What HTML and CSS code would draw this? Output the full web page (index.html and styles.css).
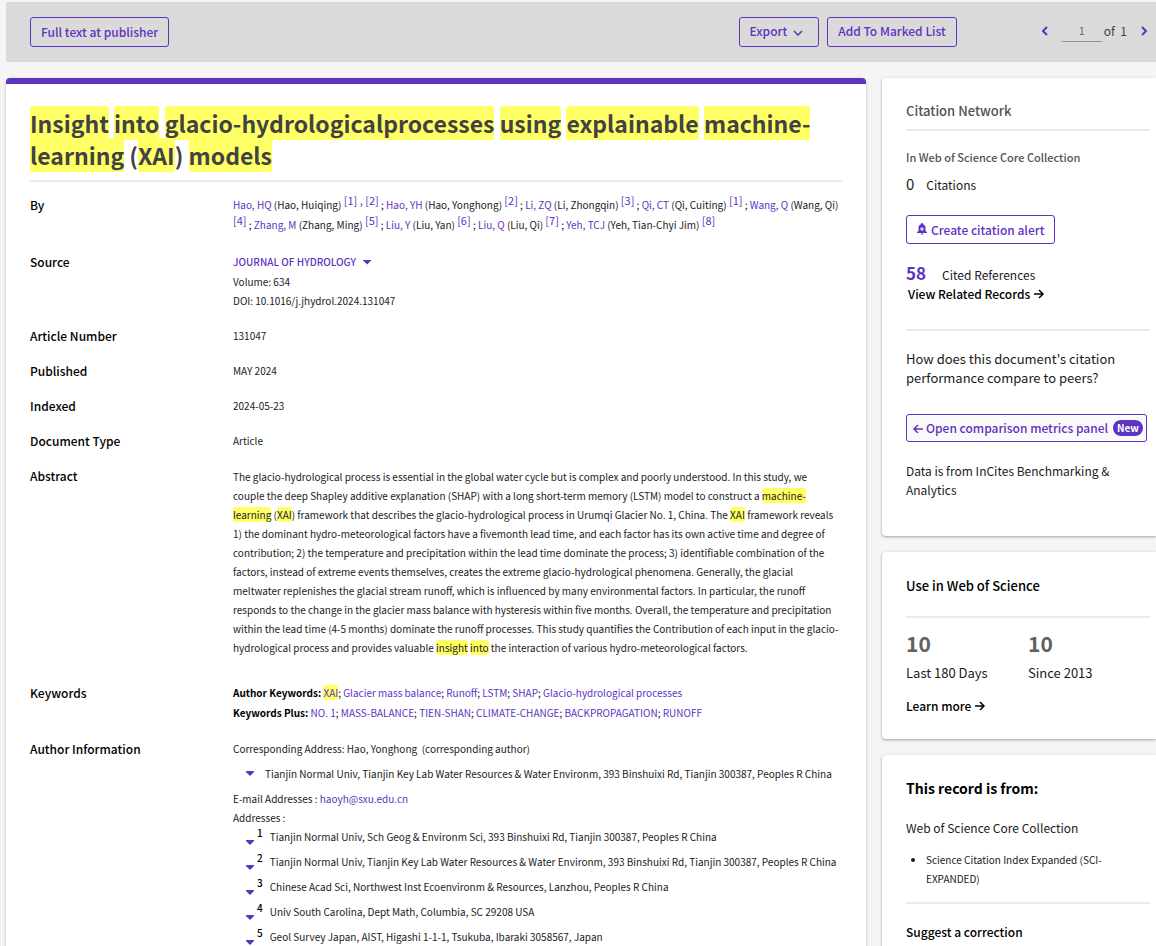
FILE: index.html
```html
<!DOCTYPE html>
<html lang="en">
<head>
  <meta charset="UTF-8">
  <title>Insight into glacio-hydrological processes - Web of Science</title>
  <link rel="stylesheet" href="styles.css">
</head>
<body>
  <!-- Top action bar -->
  <header class="toolbar">
    <button class="btn">Full text at publisher</button>
    <div class="toolbar-actions">
      <button class="btn">Export
        <svg class="chevron" width="10" height="6" viewBox="0 0 10 6"><path d="M1 1l4 4 4-4"/></svg>
      </button>
      <button class="btn">Add To Marked List</button>
    </div>
    <nav class="pager" aria-label="Record navigation">
      <button class="pager-arrow" aria-label="Previous record">
        <svg width="6" height="10" viewBox="0 0 6 10"><path d="M5 1L1 5l4 4"/></svg>
      </button>
      <input class="pager-input" type="text" value="1" aria-label="Record number">
      <span class="pager-total">of&nbsp; 1</span>
      <button class="pager-arrow" aria-label="Next record">
        <svg width="6" height="10" viewBox="0 0 6 10"><path d="M1 1l4 4-4 4"/></svg>
      </button>
    </nav>
  </header>

  <div class="layout">
    <!-- Full record -->
    <main class="record">
      <h1><mark>Insight</mark> <mark>into</mark> <mark>glacio-hydrologicalprocesses</mark> <mark>using</mark> <mark>explainable</mark> <mark>machine-learning</mark> (<mark>XAI</mark>) <mark>models</mark></h1>

      <dl class="fields">
        <dt>By</dt>
        <dd class="authors">
          <a href="#">Hao, HQ</a> (Hao, Huiqing) <sup><a href="#">[1]</a> , <a href="#">[2]</a></sup> ;
          <a href="#">Hao, YH</a> (Hao, Yonghong) <sup><a href="#">[2]</a></sup> ;
          <a href="#">Li, ZQ</a> (Li, Zhongqin) <sup><a href="#">[3]</a></sup> ;
          <a href="#">Qi, CT</a> (Qi, Cuiting) <sup><a href="#">[1]</a></sup> ;
          <a href="#">Wang, Q</a> (Wang, Qi) <sup><a href="#">[4]</a></sup> ;
          <a href="#">Zhang, M</a> (Zhang, Ming) <sup><a href="#">[5]</a></sup> ;
          <a href="#">Liu, Y</a> (Liu, Yan) <sup><a href="#">[6]</a></sup> ;
          <a href="#">Liu, Q</a> (Liu, Qi) <sup><a href="#">[7]</a></sup> ;
          <a href="#">Yeh, TCJ</a> (Yeh, Tian-Chyi Jim) <sup><a href="#">[8]</a></sup>
        </dd>

        <dt>Source</dt>
        <dd>
          <button class="journal">JOURNAL OF HYDROLOGY <span class="caret"></span></button>
          <div>Volume: 634</div>
          <div>DOI: 10.1016/j.jhydrol.2024.131047</div>
        </dd>

        <dt>Article Number</dt>
        <dd>131047</dd>

        <dt>Published</dt>
        <dd>MAY 2024</dd>

        <dt>Indexed</dt>
        <dd>2024-05-23</dd>

        <dt>Document Type</dt>
        <dd>Article</dd>

        <dt>Abstract</dt>
        <dd class="abstract">The glacio-hydrological process is essential in the global water cycle but is complex and poorly understood. In this study, we couple the deep Shapley additive explanation (SHAP) with a long short-term memory (LSTM) model to construct a <mark>machine-learning</mark> (<mark>XAI</mark>) framework that describes the glacio-hydrological process in Urumqi Glacier No. 1, China. The <mark>XAI</mark> framework reveals 1) the dominant hydro-meteorological factors have a fivemonth lead time, and each factor has its own active time and degree of contribution; 2) the temperature and precipitation within the lead time dominate the process; 3) identifiable combination of the factors, instead of extreme events themselves, creates the extreme glacio-hydrological phenomena. Generally, the glacial meltwater replenishes the glacial stream runoff, which is influenced by many environmental factors. In particular, the runoff responds to the change in the glacier mass balance with hysteresis within five months. Overall, the temperature and precipitation within the lead time (4-5 months) dominate the runoff processes. This study quantifies the Contribution of each input in the glacio-hydrological process and provides valuable <mark>insight</mark> <mark>into</mark> the interaction of various hydro-meteorological factors.</dd>

        <dt>Keywords</dt>
        <dd class="keywords">
          <div><b>Author Keywords:</b> <a href="#"><mark>XAI</mark></a>; <a href="#">Glacier mass balance</a>; <a href="#">Runoff</a>; <a href="#">LSTM</a>; <a href="#">SHAP</a>; <a href="#">Glacio-hydrological processes</a></div>
          <div><b>Keywords Plus:</b> <a href="#">NO. 1</a>; <a href="#">MASS-BALANCE</a>; <a href="#">TIEN-SHAN</a>; <a href="#">CLIMATE-CHANGE</a>; <a href="#">BACKPROPAGATION</a>; <a href="#">RUNOFF</a></div>
        </dd>

        <dt>Author Information</dt>
        <dd>
          <div>Corresponding Address: Hao, Yonghong&nbsp; (corresponding author)</div>
          <div class="corresponding"><span class="caret"></span>Tianjin Normal Univ, Tianjin Key Lab Water Resources &amp; Water Environm, 393 Binshuixi Rd, Tianjin 300387, Peoples R China</div>
          <div>E-mail Addresses : <a href="mailto:haoyh@sxu.edu.cn">haoyh@sxu.edu.cn</a></div>
          <div>Addresses :</div>
          <ul class="addresses">
            <li><span class="caret"></span><span class="num">1</span>Tianjin Normal Univ, Sch Geog &amp; Environm Sci, 393 Binshuixi Rd, Tianjin 300387, Peoples R China</li>
            <li><span class="caret"></span><span class="num">2</span>Tianjin Normal Univ, Tianjin Key Lab Water Resources &amp; Water Environm, 393 Binshuixi Rd, Tianjin 300387, Peoples R China</li>
            <li><span class="caret"></span><span class="num">3</span>Chinese Acad Sci, Northwest Inst Ecoenvironm &amp; Resources, Lanzhou, Peoples R China</li>
            <li><span class="caret"></span><span class="num">4</span>Univ South Carolina, Dept Math, Columbia, SC 29208 USA</li>
            <li><span class="caret"></span><span class="num">5</span>Geol Survey Japan, AIST, Higashi 1-1-1, Tsukuba, Ibaraki 3058567, Japan</li>
          </ul>
        </dd>
      </dl>
    </main>

    <!-- Sidebar -->
    <aside class="sidebar">
      <section class="card network">
        <h2>Citation Network</h2>
        <hr>
        <h3>In Web of Science Core Collection</h3>
        <p class="count"><span class="zero">0</span>Citations</p>
        <button class="btn alert-btn">
          <svg width="10" height="12" viewBox="0 0 10 12"><path fill="currentColor" fill-rule="evenodd" d="M5 0c.6 0 1 .4 1 1v.3c1.500.5 2.500 1.800 2.500 3.500V8L10 9.300V10H0v-.7L1.500 8V4.800C1.500 3.100 2.500 1.800 4 1.300V1c0-.6.4-1 1-1zM4.500 4v1.500H3v1h1.500V8h1V6.500H7v-1H5.500V4zM3.800 10.600h2.400a1.200 1.200 0 0 1-2.400 0z"/></svg>
          Create citation alert
        </button>
        <p class="count refs"><a href="#">58</a>Cited References</p>
        <a class="more related" href="#">View Related Records
          <svg class="arrow" width="10" height="10" viewBox="0 0 10 10"><path d="M0 5h9M5 1l4 4-4 4"/></svg>
        </a>
        <hr>
        <p class="question">How does this document's citation performance compare to peers?</p>
        <button class="btn metrics-btn">
          <svg class="arrow" width="10" height="10" viewBox="0 0 10 10"><path d="M10 6H1M5 2L1 6l4 4"/></svg>
          Open comparison metrics panel
          <span class="badge">New</span>
        </button>
        <p class="note">Data is from InCites Benchmarking &amp; Analytics</p>
      </section>

      <section class="card usage">
        <h2>Use in Web of Science</h2>
        <hr>
        <div class="stats">
          <div><strong>10</strong>Last 180 Days</div>
          <div><strong>10</strong>Since 2013</div>
        </div>
        <a class="more" href="#">Learn more
          <svg class="arrow" width="10" height="10" viewBox="0 0 10 10"><path d="M0 5h9M5 1l4 4-4 4"/></svg>
        </a>
      </section>

      <section class="card origin">
        <h2>This record is from:</h2>
        <p>Web of Science Core Collection</p>
        <ul>
          <li>Science Citation Index Expanded (SCI-EXPANDED)</li>
        </ul>
        <hr>
        <h3>Suggest a correction</h3>
      </section>
    </aside>
  </div>
</body>
</html>
```
FILE: styles.css
```css
* {
  box-sizing: border-box;
}
body {
  background-color: #f5f5f5;
  font-family: "Noto Sans CJK SC", "Open Sans", sans-serif;
  font-size: 10px;
  line-height: 19px;
  color: #1a1a1a;
  margin: 0;
  padding: 2px 0 0 6px;
  min-height: 100vh;
}
h1, h2, h3, p, ul, dl, dd {
  margin: 0;
  padding: 0;
}
a {
  color: #5e33bf;
  text-decoration: none;
}
button, input {
  font-family: inherit;
}
svg {
  flex: none;
}
svg path:not([fill]) {
  fill: none;
  stroke: currentColor;
  stroke-width: 2;
}
svg.arrow path,
svg.chevron path {
  stroke-width: 1.5;
}
hr {
  width: 100%;
  height: 2px;
  margin: 0;
  border: none;
  background-color: #ebebeb;
}
mark {
  background-color: #ffff66;
  color: inherit;
  border-radius: 3px;
}

/* Top action bar */
.toolbar {
  display: flex;
  align-items: center;
  height: 60px;
  padding: 0 9px 0 24px;
  background-color: #dadada;
}
.toolbar-actions {
  display: flex;
  gap: 8px;
  margin-left: auto;
}
.btn {
  display: inline-flex;
  align-items: center;
  height: 30px;
  padding: 0 10px 1px;
  border: 1px solid #5e33bf;
  border-radius: 3px;
  background-color: transparent;
  color: #5e33bf;
  font-size: 12px;
  font-weight: 500;
  white-space: nowrap;
  cursor: pointer;
}
.toolbar-actions .btn {
  padding-bottom: 3px;
}
.chevron {
  margin: 4px 5px 0 6px;
}
.pager {
  display: flex;
  align-items: center;
  margin-left: 85px;
  padding-bottom: 3px;
  font-size: 12px;
  color: #424242;
}
.pager-arrow {
  display: flex;
  padding: 0;
  border: none;
  background: none;
  color: #5e33bf;
  cursor: pointer;
}
.pager-input {
  width: 40px;
  height: 22px;
  margin: 0 2px 0 14px;
  padding: 0;
  border: none;
  border-bottom: 1px solid #949494;
  background: none;
  color: #616161;
  font-size: 10px;
  text-align: center;
}
.pager-total {
  margin-right: 14px;
}

/* Page columns */
.layout {
  display: flex;
  gap: 16px;
  margin-top: 16px;
}
.record {
  flex: 1;
  min-width: 0;
  padding: 23px 24px 0;
  border-top: 6px solid #5e33bf;
  border-radius: 4px 4px 0 0;
  background-color: #fff;
  box-shadow: 0 1px 3px rgba(0, 0, 0, 0.25);
}
.record h1 {
  padding-bottom: 9px;
  border-bottom: 2px solid #ebebeb;
  font-size: 23px;
  line-height: 32px;
  color: #424242;
}

/* Record fields */
.fields {
  display: grid;
  grid-template-columns: 203px 1fr;
  row-gap: 16px;
  margin-top: 13px;
}
.fields dt {
  color: #000;
  font-size: 12px;
  font-weight: 500;
}
.authors {
  padding-bottom: 1px;
  line-height: 20px;
}
.authors sup {
  color: #5e33bf;
  font-size: 11px;
  line-height: 0;
  vertical-align: 4px;
}
.journal {
  display: flex;
  align-items: center;
  gap: 7px;
  padding: 0;
  border: none;
  background: none;
  color: #5e33bf;
  font-size: 10px;
  font-weight: 500;
  line-height: 20px;
  cursor: pointer;
}
.caret {
  flex: none;
  width: 8px;
  height: 5px;
  background-color: #5e33bf;
  clip-path: polygon(0 0, 100% 0, 100% 20%, 50% 100%, 0 20%);
}
.abstract {
  padding: 1px 2px 10px 0;
}
.keywords {
  line-height: 20px;
}
.keywords b {
  color: #000;
}
.corresponding {
  display: flex;
  align-items: center;
  gap: 11px;
  margin: 6px 0;
  padding-left: 13px;
}
.addresses {
  list-style: none;
}
.addresses li {
  display: flex;
  align-items: flex-start;
  min-height: 25px;
  padding-left: 13px;
}
.addresses .caret {
  margin-top: 13px;
}
.num {
  margin: 0 7px 0 3px;
  line-height: 11px;
  font-weight: 500;
  color: #000;
}

/* Sidebar */
.sidebar {
  display: flex;
  flex-direction: column;
  gap: 16px;
  width: 274px;
}
.card {
  padding: 24px 6px 24px 24px;
  border-radius: 4px 0 0 4px;
  background-color: #fff;
  box-shadow: 0 1px 3px rgba(0, 0, 0, 0.35);
}
.card h2 {
  font-size: 13px;
  font-weight: 500;
  color: #000;
}
.card h3 {
  font-size: 11px;
  font-weight: 500;
}
.network {
  padding-top: 23px;
}
.network h2,
.network h3 {
  color: #525252;
}
.network h2 {
  margin-bottom: 9px;
}
.network h3 {
  margin-top: 17px;
}
.count {
  display: flex;
  align-items: baseline;
  font-size: 12px;
  margin-top: 7px;
}
.zero {
  margin-right: 12px;
  font-size: 15px;
}
.alert-btn {
  gap: 4px;
  height: 29px;
  margin-top: 21px;
}
.refs {
  margin-top: 19px;
}
.refs a {
  margin-right: 16px;
  font-size: 17px;
  font-weight: 700;
}
.more {
  display: flex;
  align-items: center;
  gap: 4px;
  color: #000;
  font-size: 12px;
  font-weight: 500;
}
.related {
  margin: 0 0 26px 2px;
}
.question {
  margin-top: 18px;
  font-size: 13px;
}
.metrics-btn {
  gap: 3px;
  height: 28px;
  margin-top: 27px;
  padding: 0 3px 1px 6px;
  background-color: #fafafa;
}
.badge {
  margin-left: 2px;
  padding: 0 4px;
  border-radius: 8px;
  background-color: #5e33bf;
  color: #fff;
  font-size: 10px;
  font-weight: 700;
  line-height: 16px;
}
.note {
  margin: 19px 0 13px;
  font-size: 12px;
}
.usage h2 {
  margin-bottom: 21px;
}
.stats {
  display: grid;
  grid-template-columns: 1fr 1fr;
  margin: 14px 0 14px;
  font-size: 13px;
}
.stats strong {
  display: block;
  margin-bottom: 9px;
  font-size: 21px;
  font-weight: 700;
  line-height: 22px;
  color: #616161;
}
.origin h2 {
  font-size: 14px;
  font-weight: 700;
}
.origin p {
  margin-top: 20px;
  font-size: 12px;
}
.origin ul {
  margin: 13px 0 14px;
  padding-left: 20px;
}
.origin h3 {
  margin-top: 18px;
  font-size: 12px;
  color: #000;
}
```
